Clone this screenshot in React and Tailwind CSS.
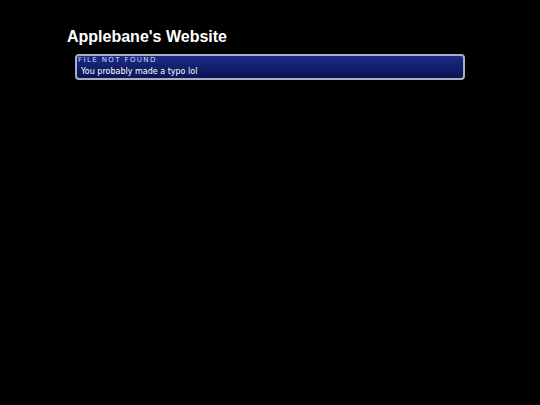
export default function App() {
  return (
    <div className="min-h-[405px] bg-black" style={{ fontFamily: '"DejaVu Sans", sans-serif' }}>
      <div className="ml-[67px] pt-[27px] w-[398px]">
        <h1
          className="text-[16px] leading-[19px] font-bold text-white"
          style={{ fontFamily: '"Liberation Sans", Arial, sans-serif' }}
        >
          Applebane's Website
        </h1>
        <div className="mt-[8px] ml-[8px] h-[26px] rounded-[4px] border-2 border-[#aab0c4] bg-gradient-to-b from-[#1c2a86] to-[#0a1552] pl-[1px]">
          <div className="text-[7px] leading-[8px] uppercase text-[#d8dcec] tracking-[1.4px]">File not found</div>
          <div className="mt-[3px] pl-[3px] text-[8px] leading-[10px] text-white">You probably made a typo lol</div>
        </div>
      </div>
    </div>
  );
}
